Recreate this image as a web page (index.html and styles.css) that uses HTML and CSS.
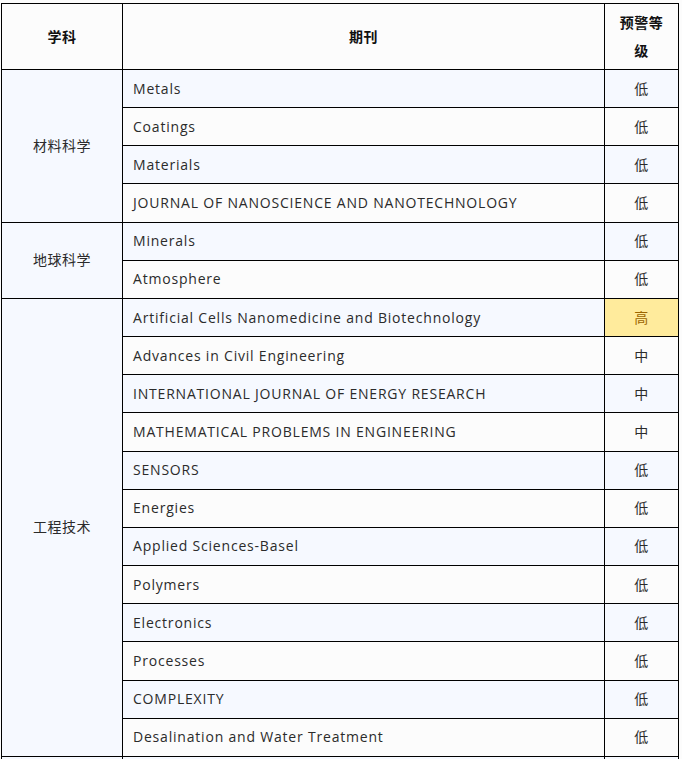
FILE: index.html
```html
<!DOCTYPE html>
<html lang="zh">
<head>
<meta charset="utf-8">
<link rel="stylesheet" href="styles.css">
</head>
<body>
<table class="warn-table">
  <colgroup>
    <col class="c-subject">
    <col class="c-journal">
    <col class="c-level">
  </colgroup>
  <thead>
    <tr class="head">
      <th>学科</th>
      <th>期刊</th>
      <th class="level-head">预警等<br>级</th>
    </tr>
  </thead>
  <tbody>
    <tr class="odd"><td class="subject" rowspan="4">材料科学</td><td class="journal">Metals</td><td class="level">低</td></tr>
    <tr class="even"><td class="journal">Coatings</td><td class="level">低</td></tr>
    <tr class="odd"><td class="journal">Materials</td><td class="level">低</td></tr>
    <tr class="even"><td class="journal">JOURNAL OF NANOSCIENCE AND NANOTECHNOLOGY</td><td class="level">低</td></tr>
    <tr class="odd"><td class="subject" rowspan="2">地球科学</td><td class="journal">Minerals</td><td class="level">低</td></tr>
    <tr class="even"><td class="journal">Atmosphere</td><td class="level">低</td></tr>
    <tr class="odd"><td class="subject" rowspan="12">工程技术</td><td class="journal">Artificial Cells Nanomedicine and Biotechnology</td><td class="level high">高</td></tr>
    <tr class="even"><td class="journal">Advances in Civil Engineering</td><td class="level">中</td></tr>
    <tr class="odd"><td class="journal">INTERNATIONAL JOURNAL OF ENERGY RESEARCH</td><td class="level">中</td></tr>
    <tr class="even"><td class="journal">MATHEMATICAL PROBLEMS IN ENGINEERING</td><td class="level">中</td></tr>
    <tr class="odd"><td class="journal">SENSORS</td><td class="level">低</td></tr>
    <tr class="even"><td class="journal">Energies</td><td class="level">低</td></tr>
    <tr class="odd"><td class="journal">Applied Sciences-Basel</td><td class="level">低</td></tr>
    <tr class="even"><td class="journal">Polymers</td><td class="level">低</td></tr>
    <tr class="odd"><td class="journal">Electronics</td><td class="level">低</td></tr>
    <tr class="even"><td class="journal">Processes</td><td class="level">低</td></tr>
    <tr class="odd"><td class="journal">COMPLEXITY</td><td class="level">低</td></tr>
    <tr class="even"><td class="journal">Desalination and Water Treatment</td><td class="level">低</td></tr>
    <tr class="odd"><td class="subject"></td><td class="journal"></td><td class="level"></td></tr>
  </tbody>
</table>
</body>
</html>
```

FILE: styles.css
```css
html, body {
  margin: 0;
  padding: 0;
  background: #fcfcfc;
}

body {
  padding: 3px 0 0 1px;
  font-family: "Open Sans", "Noto Sans CJK SC", sans-serif;
  font-size: 14px;
  color: #2b2b2b;
}

.warn-table {
  border-collapse: collapse;
  table-layout: fixed;
  width: 677px;
}

.c-subject { width: 121px; }
.c-journal { width: 482px; }
.c-level { width: 74px; }

.warn-table th,
.warn-table td {
  border: 1px solid #000;
  padding: 0 10px;
  letter-spacing: 0.5px;
}

.head th {
  height: 66px;
  padding: 4px 10px;
  box-sizing: border-box;
  font-weight: bold;
  color: #111;
  line-height: 28px;
  text-align: center;
  background: #fcfcfc;
}

.warn-table td {
  height: 38.17px;
  box-sizing: border-box;
  line-height: 20px;
}

.warn-table td.journal {
  letter-spacing: 0.8px;
  text-align: left;
}

.odd { background: #f6f9ff; }
.even { background: #fcfcfc; }

.subject { text-align: center; }
.level { text-align: center; }

.high {
  background: #ffeb9c;
  color: #9c6500;
}
```
